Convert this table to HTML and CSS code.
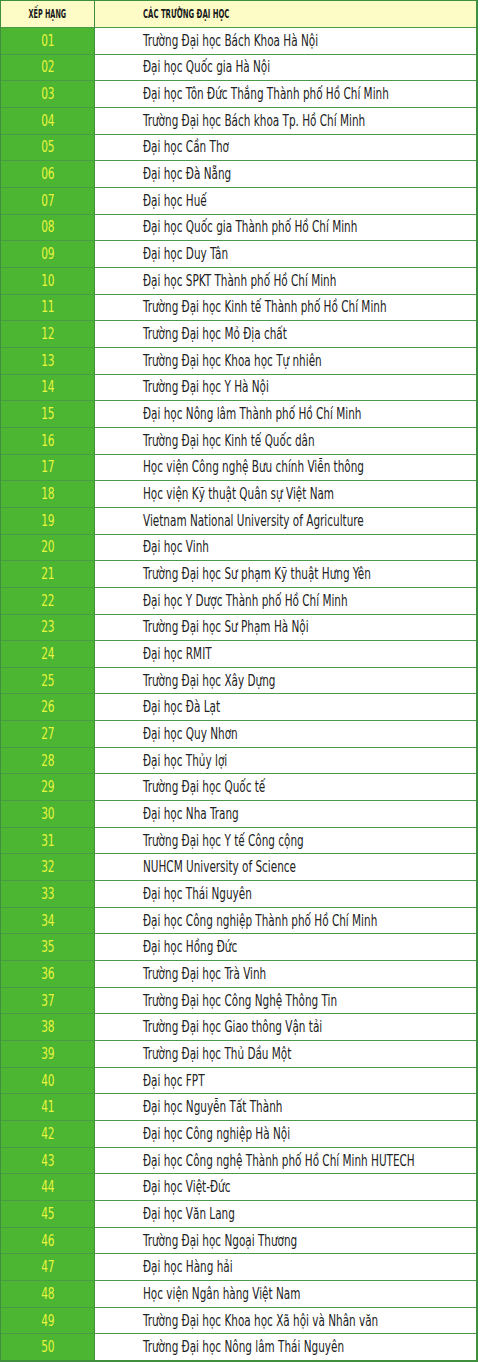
FILE: index.html
```html
<!DOCTYPE html>
<html lang="vi">
<head>
<meta charset="utf-8">
<title>Xếp hạng các trường đại học</title>
<link rel="stylesheet" href="styles.css">
</head>
<body>
<div class="table">
  <div class="row head"><div class="rank"><span>XẾP HẠNG</span></div><div class="name"><span>CÁC TRƯỜNG ĐẠI HỌC</span></div></div>
  <div class="row"><div class="rank"><span>01</span></div><div class="name"><span>Trường Đại học Bách Khoa Hà Nội</span></div></div>
  <div class="row"><div class="rank"><span>02</span></div><div class="name"><span>Đại học Quốc gia Hà Nội</span></div></div>
  <div class="row"><div class="rank"><span>03</span></div><div class="name"><span>Đại học Tôn Đức Thắng Thành phố Hồ Chí Minh</span></div></div>
  <div class="row"><div class="rank"><span>04</span></div><div class="name"><span>Trường Đại học Bách khoa Tp. Hồ Chí Minh</span></div></div>
  <div class="row"><div class="rank"><span>05</span></div><div class="name"><span>Đại học Cần Thơ</span></div></div>
  <div class="row"><div class="rank"><span>06</span></div><div class="name"><span>Đại học Đà Nẵng</span></div></div>
  <div class="row"><div class="rank"><span>07</span></div><div class="name"><span>Đại học Huế</span></div></div>
  <div class="row"><div class="rank"><span>08</span></div><div class="name"><span>Đại học Quốc gia Thành phố Hồ Chí Minh</span></div></div>
  <div class="row"><div class="rank"><span>09</span></div><div class="name"><span>Đại học Duy Tân</span></div></div>
  <div class="row"><div class="rank"><span>10</span></div><div class="name"><span>Đại học SPKT Thành phố Hồ Chí Minh</span></div></div>
  <div class="row"><div class="rank"><span>11</span></div><div class="name"><span>Trường Đại học Kinh tế Thành phố Hồ Chí Minh</span></div></div>
  <div class="row"><div class="rank"><span>12</span></div><div class="name"><span>Trường Đại học Mỏ Địa chất</span></div></div>
  <div class="row"><div class="rank"><span>13</span></div><div class="name"><span>Trường Đại học Khoa học Tự nhiên</span></div></div>
  <div class="row"><div class="rank"><span>14</span></div><div class="name"><span>Trường Đại học Y Hà Nội</span></div></div>
  <div class="row"><div class="rank"><span>15</span></div><div class="name"><span>Đại học Nông lâm Thành phố Hồ Chí Minh</span></div></div>
  <div class="row"><div class="rank"><span>16</span></div><div class="name"><span>Trường Đại học Kinh tế Quốc dân</span></div></div>
  <div class="row"><div class="rank"><span>17</span></div><div class="name"><span>Học viện Công nghệ Bưu chính Viễn thông</span></div></div>
  <div class="row"><div class="rank"><span>18</span></div><div class="name"><span>Học viện Kỹ thuật Quân sự Việt Nam</span></div></div>
  <div class="row"><div class="rank"><span>19</span></div><div class="name"><span>Vietnam National University of Agriculture</span></div></div>
  <div class="row"><div class="rank"><span>20</span></div><div class="name"><span>Đại học Vinh</span></div></div>
  <div class="row"><div class="rank"><span>21</span></div><div class="name"><span>Trường Đại học Sư phạm Kỹ thuật Hưng Yên</span></div></div>
  <div class="row"><div class="rank"><span>22</span></div><div class="name"><span>Đại học Y Dược Thành phố Hồ Chí Minh</span></div></div>
  <div class="row"><div class="rank"><span>23</span></div><div class="name"><span>Trường Đại học Sư Phạm Hà Nội</span></div></div>
  <div class="row"><div class="rank"><span>24</span></div><div class="name"><span>Đại học RMIT</span></div></div>
  <div class="row"><div class="rank"><span>25</span></div><div class="name"><span>Trường Đại học Xây Dựng</span></div></div>
  <div class="row"><div class="rank"><span>26</span></div><div class="name"><span>Đại học Đà Lạt</span></div></div>
  <div class="row"><div class="rank"><span>27</span></div><div class="name"><span>Đại học Quy Nhơn</span></div></div>
  <div class="row"><div class="rank"><span>28</span></div><div class="name"><span>Đại học Thủy lợi</span></div></div>
  <div class="row"><div class="rank"><span>29</span></div><div class="name"><span>Trường Đại học Quốc tế</span></div></div>
  <div class="row"><div class="rank"><span>30</span></div><div class="name"><span>Đại học Nha Trang</span></div></div>
  <div class="row"><div class="rank"><span>31</span></div><div class="name"><span>Trường Đại học Y tế Công cộng</span></div></div>
  <div class="row"><div class="rank"><span>32</span></div><div class="name"><span>NUHCM University of Science</span></div></div>
  <div class="row"><div class="rank"><span>33</span></div><div class="name"><span>Đại học Thái Nguyên</span></div></div>
  <div class="row"><div class="rank"><span>34</span></div><div class="name"><span>Đại học Công nghiệp Thành phố Hồ Chí Minh</span></div></div>
  <div class="row"><div class="rank"><span>35</span></div><div class="name"><span>Đại học Hồng Đức</span></div></div>
  <div class="row"><div class="rank"><span>36</span></div><div class="name"><span>Trường Đại học Trà Vinh</span></div></div>
  <div class="row"><div class="rank"><span>37</span></div><div class="name"><span>Trường Đại học Công Nghệ Thông Tin</span></div></div>
  <div class="row"><div class="rank"><span>38</span></div><div class="name"><span>Trường Đại học Giao thông Vận tải</span></div></div>
  <div class="row"><div class="rank"><span>39</span></div><div class="name"><span>Trường Đại học Thủ Dầu Một</span></div></div>
  <div class="row"><div class="rank"><span>40</span></div><div class="name"><span>Đại học FPT</span></div></div>
  <div class="row"><div class="rank"><span>41</span></div><div class="name"><span>Đại học Nguyễn Tất Thành</span></div></div>
  <div class="row"><div class="rank"><span>42</span></div><div class="name"><span>Đại học Công nghiệp Hà Nội</span></div></div>
  <div class="row"><div class="rank"><span>43</span></div><div class="name"><span>Đại học Công nghệ Thành phố Hồ Chí Minh HUTECH</span></div></div>
  <div class="row"><div class="rank"><span>44</span></div><div class="name"><span>Đại học Việt-Đức</span></div></div>
  <div class="row"><div class="rank"><span>45</span></div><div class="name"><span>Đại học Văn Lang</span></div></div>
  <div class="row"><div class="rank"><span>46</span></div><div class="name"><span>Trường Đại học Ngoại Thương</span></div></div>
  <div class="row"><div class="rank"><span>47</span></div><div class="name"><span>Đại học Hàng hải</span></div></div>
  <div class="row"><div class="rank"><span>48</span></div><div class="name"><span>Học viện Ngân hàng Việt Nam</span></div></div>
  <div class="row"><div class="rank"><span>49</span></div><div class="name"><span>Trường Đại học Khoa học Xã hội và Nhân văn</span></div></div>
  <div class="row"><div class="rank"><span>50</span></div><div class="name"><span>Trường Đại học Nông lâm Thái Nguyên</span></div></div>
</div>
</body>
</html>
```
FILE: styles.css
```css
html, body {
  margin: 0;
  padding: 0;
  background: #ffffff;
}
body {
  font-family: "DejaVu Sans Condensed", "DejaVu Sans", sans-serif;
  font-stretch: condensed;
  color: #222222;
}
.table {
  width: 478px;
  height: 1362px;
  box-sizing: border-box;
  border: 1.5px solid #3f8f3f;
  border-right-width: 2px;
  border-bottom-width: 2px;
  display: grid;
  grid-template-rows: 26px repeat(50, 1fr);
}
.row {
  display: grid;
  grid-template-columns: 94px 1fr;
  border-top: 1.3px solid #4a9a4a;
  min-height: 0;
}
.row.head {
  border-top: 0;
  background: #fdfcc6;
}
.rank {
  background: #4cb532;
  color: #e8f53c;
  border-right: 1.5px solid #3f8f3f;
  display: flex;
  align-items: center;
  justify-content: center;
  font-size: 15.5px;
  overflow: hidden;
}
.rank span {
  display: inline-block;
  transform: scaleX(0.76);
  transform-origin: center;
}
.name {
  display: flex;
  align-items: center;
  padding-left: 48px;
  font-size: 15.5px;
  white-space: nowrap;
  overflow: hidden;
}
.name span {
  display: inline-block;
  transform: scaleX(0.75);
  transform-origin: left center;
}
.head .rank {
  background: #fdfcc6;
  color: #1a1a1a;
  font-weight: bold;
  font-size: 12px;
}
.head .rank span {
  transform: scaleX(0.6);
}
.head .name {
  font-weight: bold;
  font-size: 12px;
  color: #1a1a1a;
}
.head .name span {
  transform: scaleX(0.64);
}
```
